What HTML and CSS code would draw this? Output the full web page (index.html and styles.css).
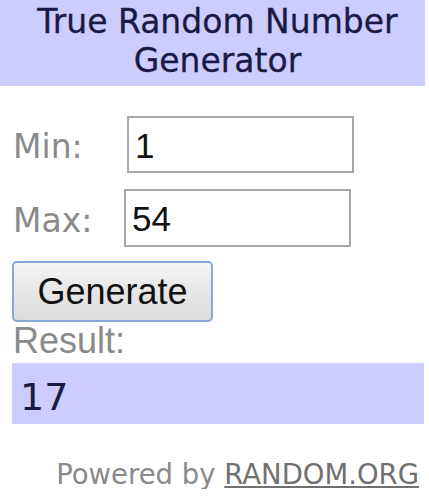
FILE: index.html
```html
<!DOCTYPE html>
<html>
<head>
<meta charset="utf-8">
<link rel="stylesheet" href="styles.css">
</head>
<body>
<div class="widget">
  <div class="header">True Random Number<br>Generator</div>
  <div class="row row-min">
    <span class="label">Min:</span>
    <input class="field field-min" type="text" value="1">
  </div>
  <div class="row row-max">
    <span class="label">Max:</span>
    <input class="field field-max" type="text" value="54">
  </div>
  <button class="gen" type="button">Generate</button>
  <div class="result-label">Result:</div>
  <div class="result">17</div>
  <div class="powered">Powered by <a href="#">RANDOM.ORG</a></div>
</div>
</body>
</html>
```

FILE: styles.css
```css
html, body {
  margin: 0;
  padding: 0;
  background: #ffffff;
}
.widget {
  width: 425px;
  display: flex;
  flex-direction: column;
  font-family: "DejaVu Sans", Verdana, sans-serif;
}
.header {
  background: #ccccff;
  color: #1a1a44;
  text-align: center;
  font-size: 33px;
  line-height: 39px;
  padding: 2px 0 6px 10px;
  height: 78px;
  -webkit-text-stroke: 0.3px #1a1a44;
}
.row {
  display: flex;
  align-items: center;
  padding-left: 13px;
}
.row-min {
  margin-top: 30px;
}
.row-max {
  margin-top: 16px;
}
.label {
  color: #8a8a8a;
  font-size: 33px;
  padding-top: 4px;
  width: 111px;
}
.row-min .label {
  width: 114px;
}
.field {
  box-sizing: border-box;
  width: 227px;
  height: 57px;
  border: 2px solid #a8a8a8;
  font-family: "Liberation Sans", Arial, sans-serif;
  font-size: 35px;
  color: #111;
  padding: 2px 6px 0 6px;
  margin: 0;
  outline: none;
  background: #fff;
}
.field-max {
  height: 58px;
}
.gen {
  align-self: flex-start;
  margin: 14px 0 0 12px;
  box-sizing: border-box;
  width: 201px;
  height: 61px;
  border: 2px solid #86a8d6;
  border-radius: 5px;
  background: linear-gradient(#f6f6f6, #e6e6e6 50%, #dcdcdc);
  font-family: "Liberation Sans", Arial, sans-serif;
  font-size: 36px;
  color: #111;
  padding: 0;
}
.result-label {
  color: #8a8a8a;
  font-family: "Liberation Sans", Arial, sans-serif;
  font-size: 36px;
  line-height: 36px;
  padding-left: 13px;
  height: 36px;
  margin-top: 1px;
}
.result {
  margin: 4px 0 0 12px;
  background: #ccccff;
  color: #1a1a40;
  font-size: 38px;
  line-height: 53px;
  padding: 8px 0 0 8px;
  height: 53px;
  width: 404px;
}
.powered {
  margin-top: 35px;
  text-align: right;
  padding-right: 6px;
  color: #8a8a8a;
  font-size: 27.5px;
  line-height: 30px;
}
.powered a {
  color: #707070;
  text-decoration: underline;
}
```
